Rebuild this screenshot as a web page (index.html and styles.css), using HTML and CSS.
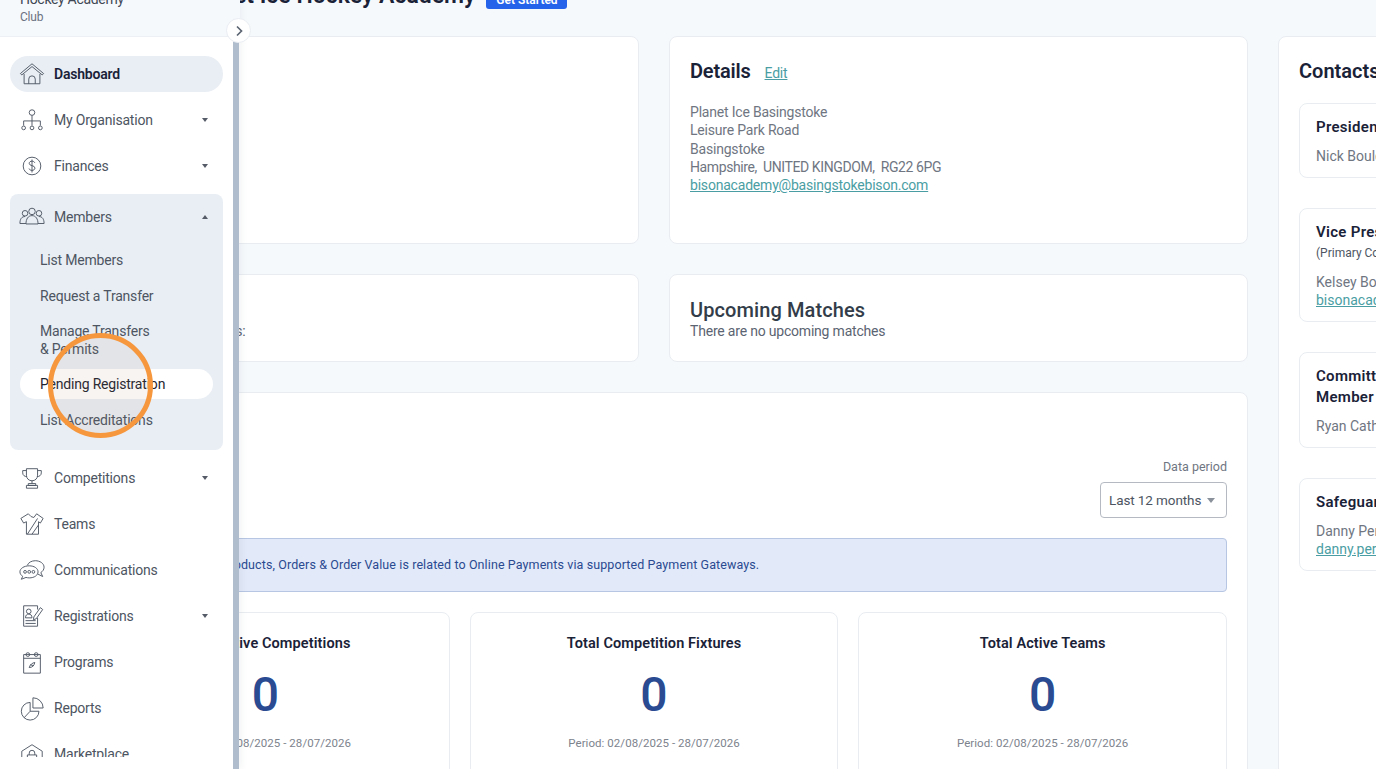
FILE: index.html
```html
<!DOCTYPE html>
<html lang="en">
<head>
    <meta charset="UTF-8">
    <title>Planet Ice Hockey Academy</title>
    <link rel="stylesheet" href="styles.css">
</head>
<body>
    <aside class="sidebar">
        <div class="side-head">
            <p class="side-name">Hockey Academy</p>
            <p class="side-type">Club</p>
        </div>
        <button class="toggle">
            <svg width="10" height="12" viewBox="0 0 10 12"><path d="M3 1.5 7.5 6 3 10.5" fill="none" stroke="#5b6472" stroke-width="1.7"/></svg>
        </button>
        <div class="side-body">
            <nav class="nav">
                <a class="nav-item active">
                    <svg class="icon" viewBox="0 0 28 28"><path d="M1.500 13.500 14 3l12.500 10.500-1.500 1.500L14 6 3 15z"/><path d="M5.500 14v10.500h17V14"/><path d="M10.500 24.500v-5a3.500 3.500 0 0 1 7 0v5"/></svg>
                    <span>Dashboard</span>
                </a>
                <a class="nav-item">
                    <svg class="icon" viewBox="0 0 28 28"><circle cx="14" cy="6" r="3"/><path d="M14 9v11M5 20v-5h18v5"/><circle cx="5" cy="22.500" r="2"/><circle cx="14" cy="22.500" r="2"/><circle cx="23" cy="22.500" r="2"/></svg>
                    <span>My Organisation</span>
                    <i class="caret"></i>
                </a>
                <a class="nav-item">
                    <svg class="icon" viewBox="0 0 28 28"><circle cx="14" cy="14" r="9.500"/><path d="M17 10.500c-.5-1.200-1.700-1.700-3-1.700-1.700 0-3 .9-3 2.400 0 3.200 6.200 1.700 6.200 5 0 1.500-1.400 2.500-3.200 2.500-1.400 0-2.700-.6-3.200-1.900M14 7v14"/></svg>
                    <span>Finances</span>
                    <i class="caret"></i>
                </a>
                <div class="nav-group">
                    <a class="nav-item">
                        <svg class="icon" viewBox="0 0 28 28"><circle cx="14" cy="8" r="3.500"/><circle cx="6.500" cy="10" r="3"/><circle cx="21.500" cy="10" r="3"/><path d="M1 21c0-5 2-7.500 5.500-7.500M27 21c0-5-2-7.500-5.500-7.500M7.500 21.500c0-5.500 2.500-9 6.500-9s6.500 3.500 6.500 9zM1 21h6.500M20.500 21H27"/></svg>
                        <span>Members</span>
                        <i class="caret up"></i>
                    </a>
                    <ul class="sub-list">
                        <li><a class="sub-item">List Members</a></li>
                        <li><a class="sub-item">Request a Transfer</a></li>
                        <li><a class="sub-item two-line">Manage Transfers<br>&amp; Permits</a></li>
                        <li><a class="sub-item current">Pending Registration</a></li>
                        <li><a class="sub-item">List Accreditations</a></li>
                    </ul>
                </div>
                <a class="nav-item">
                    <svg class="icon" viewBox="0 0 28 28"><path d="M8 4h12v7c0 3.500-2.500 6-6 6s-6-2.500-6-6zM8 6H4v2.500C4 11 6 12.500 8.500 12.500M20 6h4v2.500c0 2.500-2 4-4.500 4M14 17v3M10 20h8v2h-8zM8 22h12v3H8z"/></svg>
                    <span>Competitions</span>
                    <i class="caret"></i>
                </a>
                <a class="nav-item">
                    <svg class="icon" viewBox="0 0 28 28"><path d="M10 3 2 8l3 5 3-1.500V25h13V11.500l2 1.500 3-5-7-5-3 4-3-1zM9 25 20 8M14 25l7-10"/></svg>
                    <span>Teams</span>
                </a>
                <a class="nav-item">
                    <svg class="icon" viewBox="0 0 28 28"><path d="M11 9.500c-5.500 0-10 2.800-10 6.500 0 2 1.200 3.700 3 4.800L2.500 24l5-2c1.100.3 2.300.5 3.500.5 5.500 0 9.500-2.800 9.500-6.500S16.500 9.500 11 9.500z"/><path d="M9 9c1-3 4.500-5 8.500-5 5.200 0 9.500 3 9.500 7 0 2.500-1.500 4.500-3.500 5.800L25.500 21l-5-2.500"/><circle cx="6.500" cy="16" r="1.500"/><circle cx="11" cy="16" r="1.500"/><circle cx="15.500" cy="16" r="1.500"/></svg>
                    <span>Communications</span>
                </a>
                <a class="nav-item">
                    <svg class="icon" viewBox="0 0 28 28"><path d="M20 7V3H5v22h15v-9"/><circle cx="10.500" cy="9" r="2.500"/><path d="M7 16c0-3 1.500-4 3.500-4s3.500 1 3.500 4zM7 19h11M7 22h11M16 15l7-10 2.500 2-7 10-3 1z"/></svg>
                    <span>Registrations</span>
                    <i class="caret"></i>
                </a>
                <a class="nav-item">
                    <svg class="icon" viewBox="0 0 28 28"><path d="M5 6h18v20H5zM5 10h18"/><circle cx="9.500" cy="6" r="2"/><circle cx="18.500" cy="6" r="2"/><path d="M11 20c1-3.500 3.500-5 6-5.500-.5 3-2.500 5.500-6 5.500zM12 17l4 1"/></svg>
                    <span>Programs</span>
                </a>
                <a class="nav-item">
                    <svg class="icon" viewBox="0 0 28 28"><path d="M12 8a9.500 9.500 0 1 0 9.500 9.500H12z"/><path d="M15 3v11h11A11 11 0 0 0 15 3zM12 17.500 5.500 24.500"/></svg>
                    <span>Reports</span>
                </a>
                <a class="nav-item">
                    <svg class="icon" viewBox="0 0 28 28"><path d="M3 25V11L14 4l11 7v14zM3 25h22"/><path d="M9 15h10v8H9zM11 15v-2a3 3 0 0 1 6 0v2"/></svg>
                    <span>Marketplace</span>
                </a>
            </nav>
            <div class="scrollbar"></div>
        </div>
    </aside>

    <div class="orange-ring"></div>

    <main class="page">
        <div class="content">
            <div class="page-head">
                <div class="club-logo"></div>
                <h1>Planet Ice Hockey Academy</h1>
                <button class="get-started">Get Started</button>
            </div>

            <div class="top-row">
                <section class="card logo-card"></section>
                <section class="card details-card">
                    <div class="card-title-row">
                        <h2>Details</h2>
                        <a class="link">Edit</a>
                    </div>
                    <p class="address">Planet Ice Basingstoke<br>Leisure Park Road<br>Basingstoke<br><span class="tight">Hampshire,&nbsp; UNITED KINGDOM,&nbsp; RG22 6PG</span><br><a class="link">bisonacademy@basingstokebison.com</a></p>
                </section>
            </div>

            <div class="top-row">
                <section class="card match-card">
                    <h3>Recent Matches</h3>
                    <p>There are no recent games:</p>
                </section>
                <section class="card match-card">
                    <h3>Upcoming Matches</h3>
                    <p>There are no upcoming matches</p>
                </section>
            </div>

            <section class="card stats-panel">
                <div class="period-row">
                    <label>Data period</label>
                    <div class="select">Last 12 months <i class="caret light"></i></div>
                </div>
                <div class="alert">Data shown for Total Products, Orders &amp; Order Value is related to Online Payments via supported Payment Gateways.</div>
                <div class="stats">
                    <div class="stat">
                        <h4>Total Active Competitions</h4>
                        <p class="stat-num">0</p>
                        <p class="stat-period">Period: 02/08/2025 - 28/07/2026</p>
                    </div>
                    <div class="stat">
                        <h4>Total Competition Fixtures</h4>
                        <p class="stat-num">0</p>
                        <p class="stat-period">Period: 02/08/2025 - 28/07/2026</p>
                    </div>
                    <div class="stat">
                        <h4>Total Active Teams</h4>
                        <p class="stat-num">0</p>
                        <p class="stat-period">Period: 02/08/2025 - 28/07/2026</p>
                    </div>
                </div>
            </section>
        </div>

        <section class="card contacts">
            <h2>Contacts</h2>
            <div class="contact">
                <h5>President</h5>
                <p>Nick Boulding</p>
            </div>
            <div class="contact">
                <h5>Vice President</h5>
                <small>(Primary Contact)</small>
                <p>Kelsey Boulding<br><a class="link">bisonacademy@basingstokebison.com</a></p>
            </div>
            <div class="contact">
                <h5>Committee Member</h5>
                <p>Ryan Cathcart</p>
            </div>
            <div class="contact">
                <h5>Safeguarding</h5>
                <p>Danny Perry<br><a class="link">danny.perry@basingstokebison.com</a></p>
            </div>
        </section>
    </main>
</body>
</html>
```

FILE: styles.css
```css
* {
    box-sizing: border-box;
}

html,
body {
    margin: 0;
    height: 769px;
    overflow: hidden;
}

body {
    background-color: #f6f9fc;
    font-family: Roboto, "Liberation Sans", sans-serif;
    color: #6f7682;
    font-size: 14px;
    letter-spacing: -0.2px;
}

h1, h2, h3, h4, h5, p, ul {
    margin: 0;
    padding: 0;
}

.sidebar {
    position: fixed;
    top: 0;
    left: 0;
    z-index: 5;
    width: 239px;
    height: 769px;
    display: flex;
    flex-direction: column;
    box-shadow: 3px 0 6px rgba(60, 80, 110, 0.06);
}

.side-head {
    flex: none;
    width: 240px;
    padding-left: 20px;
    margin-top: -10px;
    height: 47px;
    background-color: #f6f9fc;
    border-bottom: 1px solid #edf0f4;
}

.side-name {
    font-size: 14px;
    letter-spacing: -0.3px;
    line-height: 18px;
    color: #3f4854;
}

.side-type {
    font-size: 12px;
    line-height: 18px;
    color: #6b7280;
}

.toggle {
    position: absolute;
    top: 18px;
    left: 226px;
    width: 25px;
    height: 25px;
    padding: 0;
    border: 1px solid #e9edf2;
    border-radius: 50%;
    background-color: #fff;
    display: flex;
    align-items: center;
    justify-content: center;
    z-index: 2;
}

.side-body {
    flex: 1;
    display: flex;
    min-height: 0;
    background-color: #fff;
}

.nav {
    width: 233px;
    height: 720px;
    overflow: hidden;
    padding: 19px 10px 0;
    display: flex;
    flex-direction: column;
    gap: 10px;
    flex: none;
}

.scrollbar {
    width: 6px;
    flex: none;
    background-color: #b0bdcc;
}

.nav-item {
    height: 36px;
    flex: none;
    display: flex;
    align-items: center;
    padding-left: 9px;
    color: #4d5562;
    font-size: 14px;
}

.nav-item span {
    margin-left: 9px;
}

.nav-item.active {
    background-color: #e9eef4;
    border-radius: 18px;
    color: #1a2238;
    font-weight: 600;
}

.icon {
    width: 26px;
    height: 26px;
    flex: none;
    fill: none;
    stroke: #4d5562;
    stroke-width: 1;
}

.caret {
    margin-left: auto;
    margin-right: 15px;
    width: 0;
    height: 0;
    border-left: 3px solid transparent;
    border-right: 3px solid transparent;
    border-top: 4px solid #555c68;
}

.caret.up {
    border-top: none;
    border-bottom: 4px solid #555c68;
}

.nav-group {
    flex: none;
    padding: 5px 0 12px;
    background-color: #e9eef4;
    border-radius: 8px;
}

.sub-list {
    list-style: none;
    margin-top: 7px;
    padding: 0 10px;
}

.sub-item {
    display: block;
    padding: 0 20px;
    line-height: 36px;
    color: #4d5562;
}

.sub-item.two-line {
    line-height: 18px;
    padding-top: 8px;
    padding-bottom: 8px;
}

.sub-item.current {
    color: #1f2530;
    background-color: #fff;
    border-radius: 15px;
    line-height: 30px;
    margin: 3px 0;
}

.orange-ring {
    position: fixed;
    left: 48px;
    top: 333px;
    width: 105px;
    height: 105px;
    border: 5px solid #f6973e;
    border-radius: 50%;
    background-color: rgba(150, 120, 90, 0.08);
    z-index: 6;
}

.page {
    display: flex;
    gap: 30px;
    padding-left: 60px;
    width: 1600px;
}

.content {
    width: 1188px;
    flex: none;
}

.page-head {
    display: flex;
    align-items: center;
    gap: 11px;
    height: 36px;
    margin-top: -23px;
    margin-bottom: 23px;
}

.club-logo {
    width: 117px;
    height: 36px;
}

.page-head h1 {
    font-size: 23px;
    font-weight: 600;
    letter-spacing: 0;
    color: #1a2238;
}

.get-started {
    align-self: flex-end;
    margin-bottom: 4px;
    padding: 0;
    background-color: #2563eb;
    color: #fff;
    border: none;
    border-radius: 3px;
    font-family: inherit;
    font-weight: 600;
    font-size: 12px;
    height: 18px;
    width: 81px;
}

.card {
    background-color: #fff;
    border: 1px solid #e9edf2;
    border-radius: 8px;
}

.top-row {
    display: grid;
    grid-template-columns: 579px 579px;
    gap: 30px;
    margin-bottom: 30px;
}

.logo-card,
.details-card {
    height: 208px;
}

.details-card {
    padding: 20px;
}

.card-title-row {
    display: flex;
    align-items: baseline;
    gap: 14px;
    line-height: 28px;
    margin-bottom: 16px;
}

.card-title-row h2 {
    font-size: 20px;
    font-weight: 600;
    color: #1a2238;
}

.link {
    color: #4a9ea3;
    text-decoration: underline;
}

.address {
    line-height: 18.3px;
}

.tight {
    letter-spacing: -0.4px;
}

.match-card {
    height: 88px;
    padding: 23px 20px 0;
}

.match-card h3 {
    font-size: 20px;
    font-weight: 500;
    line-height: 24px;
    letter-spacing: 0.1px;
    color: #333d4a;
}

.match-card p {
    line-height: 18px;
    color: #5b6472;
}

.stats-panel {
    padding: 0 20px;
    height: 500px;
}

.period-row {
    display: flex;
    flex-direction: column;
    align-items: flex-end;
    padding-top: 65px;
}

.period-row label {
    font-size: 12.5px;
    letter-spacing: 0;
    line-height: 18px;
    margin-bottom: 6px;
}

.select {
    width: 127px;
    height: 36px;
    border: 1px solid #b5bac2;
    border-radius: 4px;
    display: flex;
    align-items: center;
    padding-left: 8px;
    font-size: 13.5px;
    letter-spacing: -0.1px;
    color: #4d5562;
    background-color: #fff;
}

.caret.light {
    margin-right: 11px;
    border-left-width: 4px;
    border-right-width: 4px;
    border-top: 5px solid #8b919b;
}

.alert {
    margin-top: 20px;
    height: 54px;
    display: flex;
    align-items: center;
    padding: 0 0 2px 19px;
    background-color: #e2e9f8;
    border: 1px solid #b7c6e2;
    border-radius: 4px;
    color: #2a4a91;
    font-size: 12.5px;
    letter-spacing: 0.1px;
}

.stats {
    display: grid;
    grid-template-columns: repeat(3, 1fr);
    gap: 20px;
    margin-top: 20px;
}

.stat {
    height: 200px;
    border: 1px solid #e9edf2;
    border-radius: 8px;
    text-align: center;
    padding-top: 21px;
}

.stat h4 {
    font-size: 14.5px;
    font-weight: 600;
    letter-spacing: 0.1px;
    line-height: 20px;
    color: #1a2238;
}

.stat-num {
    font-size: 48px;
    font-weight: 500;
    letter-spacing: 0;
    line-height: 56px;
    margin-top: 13px;
    color: #2a4a91;
}

.stat-period {
    font-size: 11.5px;
    letter-spacing: 0.05px;
    line-height: 16px;
    margin-top: 12px;
    color: #7d838d;
}

.contacts {
    width: 205px;
    height: 800px;
    flex: none;
    margin-top: 36px;
    padding: 20px;
}

.contacts h2 {
    font-size: 20px;
    font-weight: 600;
    letter-spacing: 0;
    line-height: 28px;
    color: #1a2238;
    margin-bottom: 18px;
}

.contact {
    border: 1px solid #e9edf2;
    border-radius: 8px;
    padding: 13px 16px 12px;
    margin-bottom: 30px;
}

.contact h5 {
    font-size: 15px;
    font-weight: 600;
    letter-spacing: 0.3px;
    line-height: 21px;
    color: #1a2238;
}

.contact small {
    display: block;
    font-size: 12px;
    letter-spacing: 0;
    line-height: 18px;
    margin-top: 1px;
    padding-bottom: 2px;
    color: #4d5562;
}

.contact p {
    margin-top: 9px;
    line-height: 18px;
    letter-spacing: 0;
    white-space: nowrap;
}
```
